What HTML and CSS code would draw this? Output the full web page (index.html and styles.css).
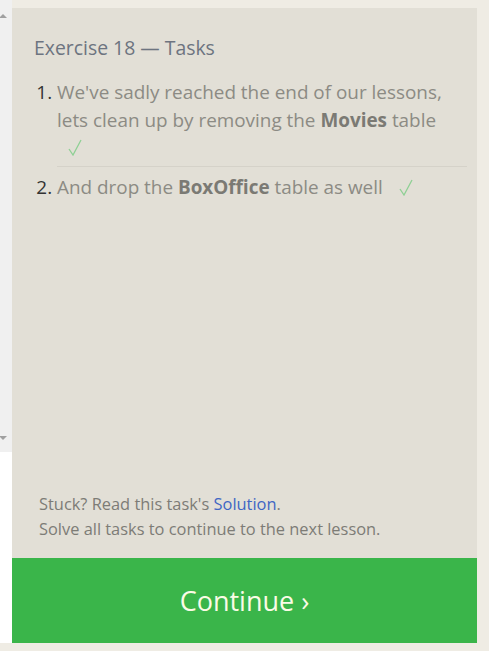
FILE: index.html
```html
<!DOCTYPE html>
<html>
<head>
<meta charset="utf-8">
<link rel="stylesheet" href="styles.css">
</head>
<body>
<div class="page">
  <div class="scrollbar">
    <div class="track">
      <span class="arrow up"></span>
      <span class="arrow down"></span>
    </div>
  </div>
  <div class="main">
    <section class="panel">
      <h2 class="title">Exercise 18 — Tasks</h2>
      <ol class="tasks">
        <li class="task">We've sadly reached the end of our lessons, lets clean up by removing the <b>Movies</b> table <svg class="check" width="14" height="17" viewBox="0 0 14 17"><polyline points="1,10 5,16 13,1" fill="none" stroke="#8ed094" stroke-width="1.3"/></svg></li>
        <li class="task">And drop the <b>BoxOffice</b> table as well <svg class="check" width="14" height="17" viewBox="0 0 14 17"><polyline points="1,10 5,16 13,1" fill="none" stroke="#8ed094" stroke-width="1.3"/></svg></li>
      </ol>
      <div class="footer">
        <p>Stuck? Read this task's <a href="#">Solution</a>.</p>
        <p>Solve all tasks to continue to the next lesson.</p>
      </div>
    </section>
    <button class="continue">Continue ›</button>
  </div>
</div>
</body>
</html>
```
FILE: styles.css
```css
html, body {
  margin: 0;
  padding: 0;
  background: #efece4;
  height: 100%;
}
body {
  font-family: "Open Sans", "Noto Sans", sans-serif;
}
.page {
  display: flex;
  align-items: flex-start;
}
.scrollbar {
  width: 12px;
  height: 643px;
  background: #ffffff;
  flex: none;
}
.track {
  height: 452px;
  background: #f0f0f0;
  display: flex;
  flex-direction: column;
  justify-content: space-between;
  align-items: center;
  padding: 14px 0 12px;
  box-sizing: border-box;
}
.arrow {
  width: 0;
  height: 0;
  border-left: 4px solid transparent;
  border-right: 4px solid transparent;
  margin-left: -6px;
}
.arrow.up { border-bottom: 4px solid #a0a0a0; }
.arrow.down { border-top: 4px solid #a0a0a0; }
.main {
  width: 465px;
  margin-top: 8px;
  display: flex;
  flex-direction: column;
}
.panel {
  height: 550px;
  background: #e2dfd6;
  box-sizing: border-box;
  padding: 27px 10px 0 22px;
  display: flex;
  flex-direction: column;
}
.title {
  margin: 0;
  font-weight: normal;
  font-size: 19.4px;
  color: #6d7480;
  line-height: 26px;
}
.tasks {
  margin: 18px 0 0;
  padding: 0 0 0 23px;
  color: #333;
  font-size: 18.9px;
  line-height: 27.5px;
}
.task {
  color: #8c8b84;
  padding-left: 0;
}
.task::marker { color: #333; }
.task + .task {
  border-top: 1px solid #d5d2c9;
  margin-top: 4px;
  padding-top: 7px;
}
.task b { color: #7b7a74; font-weight: 700; }
.check {
  margin-left: 11px;
  margin-right: 10px;
  vertical-align: -2px;
}
.footer {
  margin-top: auto;
  padding: 0 0 17px 5px;
  font-size: 16.4px;
  line-height: 25px;
  color: #7d7c76;
}
.footer p { margin: 0; }
.footer a { color: #3f66c4; text-decoration: none; }
.continue {
  height: 85px;
  border: none;
  background: #3ab54a;
  color: #fbfbe6;
  font-family: "Open Sans", "Noto Sans", sans-serif;
  font-size: 27px;
  padding: 0;
  cursor: pointer;
}
```
